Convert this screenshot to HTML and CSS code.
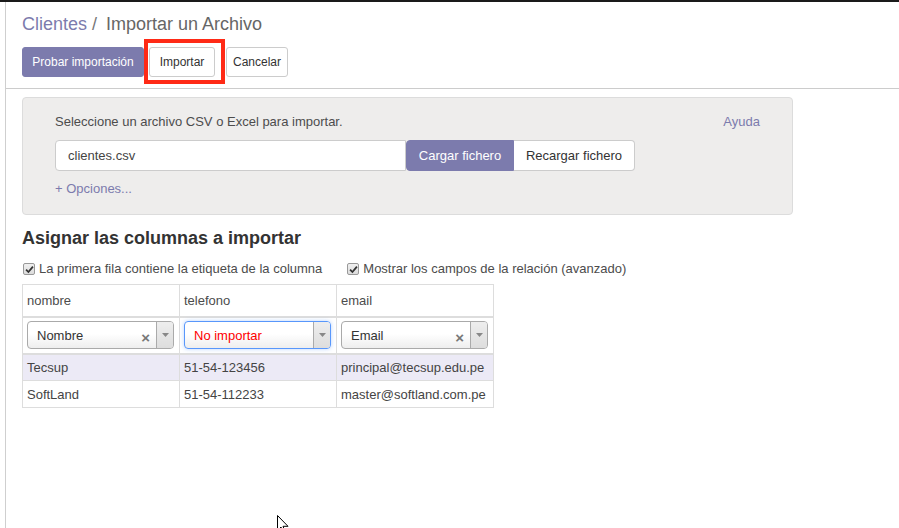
FILE: index.html
```html
<!DOCTYPE html>
<html lang="es">
<head>
<meta charset="utf-8">
<title>Importar un Archivo</title>
<link rel="stylesheet" href="styles.css">
</head>
<body>
<div class="topbar"></div>
<div class="frame">
  <div class="control-panel">
    <ol class="breadcrumb">
      <li class="crumb-link">Clientes</li>
      <li class="crumb-sep">/</li>
      <li class="crumb-active">Importar un Archivo</li>
    </ol>
    <div class="cp-buttons">
      <button class="btn btn-primary">Probar importación</button>
      <div class="highlight"><button class="btn btn-default btn-import">Importar</button></div>
      <button class="btn btn-default btn-cancel">Cancelar</button>
    </div>
  </div>

  <div class="content">
    <div class="import-panel">
      <div class="panel-top">
        <span class="panel-label">Seleccione un archivo CSV o Excel para importar.</span>
        <a class="link help">Ayuda</a>
      </div>
      <div class="file-row">
        <div class="file-input">clientes.csv</div>
        <button class="btn btn-primary btn-load">Cargar fichero</button>
        <button class="btn btn-default btn-reload">Recargar fichero</button>
      </div>
      <a class="link options">+ Opciones...</a>
    </div>

    <h3 class="section-title">Asignar las columnas a importar</h3>
    <div class="checks">
      <label class="check"><span class="box"><svg viewBox="0 0 10 10" width="9" height="9"><path d="M1.2 5.2 L3.8 7.8 L8.8 1.8" fill="none" stroke="#333" stroke-width="2"/></svg></span>La primera fila contiene la etiqueta de la columna</label>
      <label class="check"><span class="box"><svg viewBox="0 0 10 10" width="9" height="9"><path d="M1.2 5.2 L3.8 7.8 L8.8 1.8" fill="none" stroke="#333" stroke-width="2"/></svg></span>Mostrar los campos de la relación (avanzado)</label>
    </div>

    <table class="preview">
      <tr class="head-row">
        <td>nombre</td><td>telefono</td><td>email</td>
      </tr>
      <tr class="select-row">
        <td><div class="sel"><span class="sel-text">Nombre</span><span class="sel-x">×</span><span class="sel-arrow"><svg width="7" height="4" viewBox="0 0 7 4"><path d="M0 0 L7 0 L3.5 4 Z" fill="#888"/></svg></span></div></td>
        <td><div class="sel sel-focus"><span class="sel-text sel-red">No importar</span><span class="sel-arrow"><svg width="7" height="4" viewBox="0 0 7 4"><path d="M0 0 L7 0 L3.5 4 Z" fill="#888"/></svg></span></div></td>
        <td><div class="sel"><span class="sel-text">Email</span><span class="sel-x">×</span><span class="sel-arrow"><svg width="7" height="4" viewBox="0 0 7 4"><path d="M0 0 L7 0 L3.5 4 Z" fill="#888"/></svg></span></div></td>
      </tr>
      <tr class="data-row odd">
        <td>Tecsup</td><td>51-54-123456</td><td>principal@tecsup.edu.pe</td>
      </tr>
      <tr class="data-row">
        <td>SoftLand</td><td>51-54-112233</td><td>master@softland.com.pe</td>
      </tr>
    </table>
  </div>
</div>
<svg class="cursor" width="12" height="19" viewBox="0 0 12 19"><path d="M0.5 0.5 L0.5 15.5 L4 12 L6.5 18 L8.5 17 L6 11.3 L11 11.3 Z" fill="#fff" stroke="#000" stroke-width="1"/></svg>
</body>
</html>
```

FILE: styles.css
```css
html, body {
  margin: 0;
  padding: 0;
  background: #fff;
}
body {
  font-family: "Liberation Sans", Arial, sans-serif;
  font-size: 13px;
  color: #4c4c4c;
  height: 528px;
  overflow: hidden;
  position: relative;
}
.topbar {
  height: 2px;
  background: #1a1a1a;
}
.frame {
  margin-left: 5px;
  border-left: 1px solid #cfcfcf;
  height: 526px;
}
.control-panel {
  padding: 11px 0 4px 16px;
  border-bottom: 1px solid #cccccc;
}
.breadcrumb {
  list-style: none;
  margin: 0;
  padding: 0;
  display: flex;
  font-size: 18px;
  line-height: 22px;
}
.crumb-link { color: #7c7bad; }
.crumb-sep { color: #777; margin-left: 5px; margin-right: 9px; }
.crumb-active { color: #666; }
.cp-buttons {
  display: flex;
  align-items: center;
  margin-top: 4px;
}
.btn {
  font-family: "Liberation Sans", Arial, sans-serif;
  font-size: 12px;
  height: 30px;
  border-radius: 3px;
  padding: 0 11px;
  border: 1px solid #ccc;
  background: #fff;
  color: #333;
  cursor: pointer;
}
.btn-primary {
  background: #7c7bad;
  border-color: #7c7bad;
  color: #fff;
}
.cp-buttons .btn-primary {
  width: 122px;
  padding: 0;
}
.highlight {
  border: 4px solid #ff2a16;
  padding: 4px 6px 3px 1px;
}
.btn-import { width: 66px; padding: 0; }
.btn-cancel { width: 62px; padding: 0; margin-left: 1px; }

.content {
  padding: 8px 0 0 16px;
}
.import-panel {
  width: 737px;
  background: #eeedec;
  border: 1px solid #dcdcdc;
  border-radius: 4px;
  padding: 15px 0 16px 32px;
}
.panel-top {
  display: flex;
  justify-content: space-between;
  width: 705px;
  line-height: 18px;
}
.panel-label { color: #4c4c4c; }
.link { color: #7c7bad; text-decoration: none; }
.file-row {
  display: flex;
  margin-top: 9px;
}
.file-input {
  box-sizing: border-box;
  width: 351px;
  height: 31px;
  background: #fff;
  border: 1px solid #ccc;
  border-radius: 4px 0 0 4px;
  padding: 0 12px;
  line-height: 29px;
  color: #444;
  font-size: 13px;
}
.file-row .btn {
  height: 31px;
  font-size: 13px;
}
.btn-load {
  width: 108px;
  padding: 0;
  border-radius: 4px 0 0 4px;
}
.btn-reload {
  width: 121px;
  padding: 0;
  border-radius: 0 4px 4px 0;
  border-left: 0;
}
.options {
  display: block;
  margin-top: 9px;
  line-height: 18px;
}

.section-title {
  margin: 12px 0 0 0;
  font-size: 18px;
  line-height: 22px;
  font-weight: bold;
  color: #333;
}
.checks {
  display: flex;
  margin-top: 12px;
  line-height: 16px;
}
.check {
  display: flex;
  align-items: center;
  color: #4c4c4c;
}
.check + .check { margin-left: 24px; }
.box {
  box-sizing: border-box;
  width: 12px;
  height: 12px;
  border: 1px solid #999;
  border-radius: 2px;
  background: linear-gradient(#f0f0f0, #dcdcdc);
  display: inline-flex;
  align-items: center;
  justify-content: center;
  margin-right: 4px;
  margin-left: 1px;
}
.preview {
  border-collapse: collapse;
  margin-top: 7px;
  width: 472px;
  table-layout: fixed;
}
.preview td {
  border: 1px solid #ddd;
  padding: 0 4px;
  width: 157px;
  box-sizing: border-box;
  color: #4c4c4c;
}
.head-row td { height: 32px; }
.select-row td {
  border-top: 2px solid #ddd;
  border-bottom: 2px solid #ddd;
  height: 37px;
}
.data-row td { height: 27px; color: #444; }
.data-row.odd td { background: #eceaf6; }

.sel {
  box-sizing: border-box;
  height: 28px;
  width: 147px;
  border: 1px solid #aaa;
  border-radius: 4px;
  background: linear-gradient(#fff 0%, #fff 45%, #eee 100%);
  display: flex;
  align-items: center;
  position: relative;
}
.sel-focus {
  border-color: #5897fb;
  box-shadow: 0 0 4px rgba(88,151,251,0.4);
}
.sel-text {
  flex: 1;
  padding-left: 9px;
  font-size: 13px;
  color: #333;
}
.sel-red { color: #ff0000; }
.sel-x {
  color: #777;
  font-size: 15px;
  font-weight: bold;
  margin-right: 6px;
  margin-top: 4px;
}
.sel-arrow {
  width: 16px;
  align-self: stretch;
  border-left: 1px solid #aaa;
  background: linear-gradient(#eee, #ddd);
  border-radius: 0 3px 3px 0;
  display: flex;
  align-items: center;
  justify-content: center;
}
.cursor {
  position: absolute;
  left: 277px;
  top: 515px;
}
```
